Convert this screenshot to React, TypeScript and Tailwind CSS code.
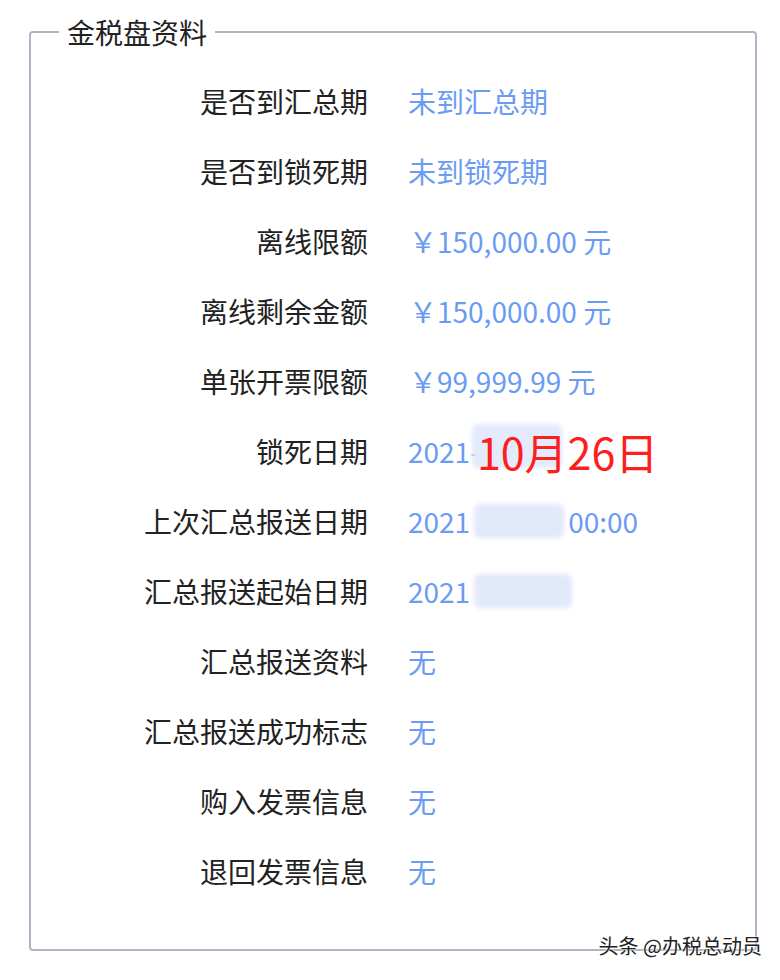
import React from 'react';

type Row = { label: string; value: React.ReactNode };

const Patch: React.FC<{ w: string }> = ({ w }) => (
    <span className={`inline-block h-[34px] ${w} rounded-md bg-[#e2e9fb] blur-[2px] align-middle`} />
);

const rows: Row[] = [
    { label: '是否到汇总期', value: '未到汇总期' },
    { label: '是否到锁死期', value: '未到锁死期' },
    { label: '离线限额', value: <span className="pl-[1px]">￥150,000.00 元</span> },
    { label: '离线剩余金额', value: <span className="pl-[1px]">￥150,000.00 元</span> },
    { label: '单张开票限额', value: <span className="pl-[1px]">￥99,999.99 元</span> },
    {
        label: '锁死日期',
        value: (
            <span className="relative flex items-center">
                <span>2021-</span>
                <span className="absolute left-[64px] top-[-6px] h-[44px] w-[90px] rounded-md bg-[#e3eafb] blur-[2px]" />
                <span className="relative -ml-[3px] text-[43px] leading-none text-[#ff1e1e]">10月26日</span>
            </span>
        ),
    },
    {
        label: '上次汇总报送日期',
        value: (
            <span className="flex items-center gap-[4px]">
                <span>2021</span>
                <Patch w="w-[90px]" />
                <span>00:00</span>
            </span>
        ),
    },
    {
        label: '汇总报送起始日期',
        value: (
            <span className="flex items-center gap-[4px]">
                <span>2021</span>
                <Patch w="w-[98px]" />
            </span>
        ),
    },
    { label: '汇总报送资料', value: '无' },
    { label: '汇总报送成功标志', value: '无' },
    { label: '购入发票信息', value: '无' },
    { label: '退回发票信息', value: '无' },
];

const App: React.FC = () => {
    return (
        <div className="relative h-[980px] w-[780px] bg-white font-['Noto_Sans_CJK_SC','Microsoft_YaHei',sans-serif]">
            <div className="pl-[29px] pr-[23px] pt-[17px]">
                <fieldset className="h-[934px] rounded-[4px] border-2 border-[#b3b3c3] px-0 pb-0 pt-[19px]">
                    <legend className="ml-[28px] px-[8px] text-[28px] leading-[30px] text-[#222]">金税盘资料</legend>
                    <div className="flex flex-col">
                        {rows.map(row => (
                            <div key={row.label} className="grid h-[70px] grid-cols-[337px_1fr] items-center gap-x-[40px] text-[28px]">
                                <div className="text-right text-[#222]">{row.label}</div>
                                <div className="flex items-center text-[#6b9bf2]">{row.value}</div>
                            </div>
                        ))}
                    </div>
                </fieldset>
            </div>

            <div className="absolute right-[18px] top-[932px] text-[20px] leading-[28px] text-[#222] [text-shadow:0_0_2px_#fff,0_0_2px_#fff]">
                头条 @办税总动员
            </div>
        </div>
    );
};

export default App;
